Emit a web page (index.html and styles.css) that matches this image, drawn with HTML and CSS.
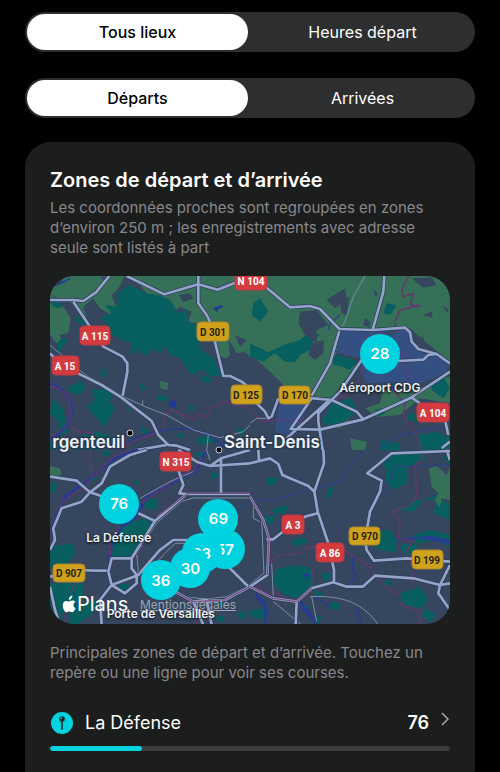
FILE: index.html
```html
<!DOCTYPE html>
<html lang="fr">
<head>
<meta charset="utf-8">
<meta name="viewport" content="width=device-width, initial-scale=1">
<title>Zones de départ et d’arrivée</title>
<link rel="stylesheet" href="styles.css">
</head>
<body>
<main class="page">
  <div class="segmented">
    <button class="segment segment-on" type="button" aria-pressed="true">Tous lieux</button>
    <button class="segment" type="button" aria-pressed="false">Heures départ</button>
  </div>
  <div class="segmented">
    <button class="segment segment-on" type="button" aria-pressed="true">Départs</button>
    <button class="segment" type="button" aria-pressed="false">Arrivées</button>
  </div>

  <section class="card">
    <h1 class="title">Zones de départ et d’arrivée</h1>
    <p class="note">Les coordonnées proches sont regroupées en zones d’environ 250 m ; les enregistrements avec adresse seule sont listés à part</p>

    <div class="map">
      <svg class="map-art" viewBox="0 1 400 348">
        <rect class="land" width="400" height="350"/>
        <g transform="scale(.33333)">
          <!-- north-west -->
          <g>
            <path class="green" d="M45 3H225L205 40 185 60 200 100 180 118 150 100 130 70 100 95 110 130 90 105 60 82 20 78 0 72V40L30 30ZM0 84 40 95 62 130 55 175 28 180 42 212 20 205 0 180ZM225 3H600V245L585 230 560 235 540 200 520 175 505 195 540 235 530 250 510 245 495 195 450 190 440 145 415 140 425 110 390 95 370 110 360 75 330 62 290 55 270 30Z"/>
            <path class="park" d="M205 50 240 30 290 55 330 62 360 75 385 115 412 105 415 140 440 150 445 195 455 225 490 250 515 300 480 305 460 285 425 300 400 265 385 245 365 245 345 215 330 235 305 222 290 245 265 225 240 240 245 205 215 195 185 180 175 150 150 130 185 115 165 90 200 95ZM0 80H45L30 100 10 95ZM75 120 115 145 95 150 75 135ZM20 205 42 185 55 195 25 235ZM155 280 168 285 165 308 150 300ZM50 335 85 325 85 315 110 335 90 360 60 350ZM125 345 190 340 180 380 195 400 165 458 110 395 135 375ZM10 370 40 405 55 470 15 490 30 445 0 415ZM270 325 290 335 275 350ZM325 360 355 365 350 378 320 375ZM415 385 435 400 420 412ZM450 300 485 310 475 325 455 318ZM100 480 140 470 195 485 160 500 165 525H90ZM235 395 240 408 230 410ZM370 480 400 475 405 490ZM550 345 575 380 555 385ZM560 455 590 465 570 485ZM440 490 475 480 500 500 450 510ZM0 500H60L85 525H0ZM270 445 295 470 280 480Z"/>
            <path class="land" d="M150 5H185L165 20ZM555 180 590 195 570 215ZM5 60 60 85 40 92ZM385 60 420 55 430 70 400 82Z"/>
            <path class="green" d="M330 318 355 325 352 345 332 340ZM505 195 535 195 540 240 525 250 512 240Z"/>
            <path class="lake" d="M357 380 368 373 380 382 375 400 358 396ZM490 98 515 90 520 95 505 102 500 112Z"/>
            <path class="river wide" d="M0 327C35 335 62 370 65 400 68 440 30 480 0 492"/>
            <path class="river" d="M0 28C20 28 40 25 60 10M190 525C240 500 290 468 370 462 440 455 480 475 520 515"/>
            <path class="border" d="M0 332C40 342 60 370 62 405 68 440 30 475 0 485M62 455 90 470 130 475 130 490M340 460 345 420 365 405 430 435 440 420 470 425 480 400 520 380 600 400M210 525C250 495 300 480 330 470"/>
            <path class="rail" d="M0 210 100 295 220 365 285 395 350 420 430 465 510 488 580 470 600 450M278 376V392M475 480 470 525"/>
            <path class="case" d="M0 75H70L100 78 138 52 178 3M70 80 120 155 160 215 218 245 232 265 232 290 218 362M230 3 343 58 445 28M445 3V85L470 120 480 140 520 303 540 303 575 320 600 340M445 28 503 44 600 5M0 235 30 265 90 298 155 330 215 368 305 438 325 480 355 510 380 512 420 525M260 525 350 510"/>
            <path class="road" d="M0 75H70L100 78 138 52 178 3M70 80 120 155 160 215 218 245 232 265 232 290 218 362M230 3 343 58 445 28M445 3V85L470 120 480 140 520 303 540 303 575 320 600 340M445 28 503 44 600 5M0 235 30 265 90 298 155 330 215 368 305 438 325 480 355 510 380 512 420 525M260 525 350 510"/>
          </g>
          <!-- north-east -->
          <g transform="translate(600)">
            <path class="green" d="M0 3H600V260L520 195 480 160 370 165 270 165 255 255 225 310 185 365 155 350 110 340 60 290 0 235ZM185 365 235 255 300 280 318 270 245 370ZM400 345 480 355 570 310 600 305V385L510 370 450 420 380 425 345 400 390 385ZM250 455 285 420 300 440 270 460ZM300 490 350 500 345 525H305Z"/>
            <path class="park" d="M10 85 30 70 55 110 30 140 5 120ZM0 205 55 232 100 210 150 195 185 165 210 180 190 195 180 225 150 240 135 262 105 260 75 235 40 260 0 245ZM255 240 300 250 322 262 300 285 250 265ZM410 85 440 90 420 120 400 115ZM245 385 305 370 320 410 290 435 250 460 215 440ZM500 260 560 255 565 275 540 280ZM545 320 580 305 600 340 580 370 545 345ZM470 420 520 410 505 440 470 435ZM395 495 450 505 450 525H385ZM505 480 560 470 600 490V525H510ZM375 405 400 400 405 415 385 425Z"/>
            <path class="land" d="M230 75 285 40 290 75 255 100ZM150 110 200 105 235 150 200 165 200 205 165 180 145 145ZM185 205 222 195 220 235 195 255 175 240ZM270 85 298 65 290 120 275 115ZM485 10 545 8 560 30 520 38ZM370 40 385 60 375 65ZM520 120 545 110 548 128ZM345 130 360 140 360 158 340 150ZM575 90 598 105 590 112ZM0 260 60 290 110 340 80 355 0 380ZM520 185 522 210 490 185ZM300 290 340 285 350 320 320 325Z"/>
            <path class="airport" d="M272 168 360 168 460 160 480 175 500 220 555 235 600 265 590 290 500 330 440 322 350 325 330 290 335 250 260 235ZM85 390 185 370 145 460 110 480 75 470Z"/>
            <path class="park" d="M410 165 440 165 430 180 400 178ZM250 245 315 255 300 278 250 270Z"/>
            <path class="river thin" d="M270 120 240 145 235 165M380 525 450 480 520 465 600 455"/>
            <path class="border" d="M475 5 455 45 460 65 490 55 480 90 510 92 450 105 435 140 440 170 350 185 345 250 330 300 320 340 240 385 215 390 175 440 100 435 40 440 0 405M425 340 465 385 460 420 500 480 515 525M455 230 475 310"/>
            <path class="rail" d="M345 3 310 65 285 140 270 165M0 445 20 430 60 430"/>
            <path class="case" d="M0 5 50 38 120 97 180 93 210 102 268 162 370 165 465 158 480 172 485 200 505 222 560 237 600 265M268 168 240 265 185 362M403 3 400 50 368 165M445 258 520 254 535 240 560 237M335 255 270 350 235 385 205 415 205 440 218 525M165 368 245 375 320 410 340 433M185 370 122 462 210 464 340 433 480 370 600 290M235 378 110 490M485 368 510 385M85 370 65 425 55 430 45 410 20 385M585 435 595 480M575 520 600 500"/>
            <path class="road" d="M0 5 50 38 120 97 180 93 210 102 268 162 370 165 465 158 480 172 485 200 505 222 560 237 600 265M268 168 240 265 185 362M403 3 400 50 368 165M445 258 520 254 535 240 560 237M335 255 270 350 235 385 205 415 205 440 218 525M165 368 245 375 320 410 340 433M185 370 122 462 210 464 340 433 480 370 600 290M235 378 110 490M485 368 510 385M85 370 65 425 55 430 45 410 20 385M585 435 595 480M575 520 600 500"/>
          </g>
          <!-- south-west -->
          <g transform="translate(0 525)">
            <path class="green" d="M0 48 30 55 35 75 0 80ZM225 235 275 225 245 320 220 325Z"/>
            <path class="park" d="M5 95 20 100 15 130 0 125ZM270 155 320 145 325 175 290 180ZM215 225 280 205 310 220 265 300 240 325 185 325 190 275ZM0 290 70 280 75 310 50 345 0 350ZM0 400 100 400 100 450 40 480 30 525H0ZM60 470 140 450 130 490 80 525H60ZM150 10 180 0 175 20ZM480 60 510 75 490 90ZM215 400 245 405 235 425 200 415ZM400 485 420 490 410 510ZM495 500 510 495 525 505 515 520ZM560 490 590 480 580 515ZM120 75 145 80 130 98ZM430 5 470 10 450 30ZM490 460 520 450 515 475ZM250 95 265 88 265 110Z"/>
            <path class="river wide" d="M265 0 200 20 110 95 50 135 15 210 0 250M465 5 440 60 390 85 290 140 255 205 215 230 185 280 175 350 185 400 220 430 265 400"/>
            <path class="border" d="M240 0 190 20 100 110 35 160 0 250M120 0 118 40 130 80 115 95M455 20 435 60 385 80 265 165M320 200 260 320 190 330 175 370M385 60 410 130M40 345 75 400 60 430M390 430 430 470 440 525M210 230 180 280 182 330"/>
            <path class="rail" d="M600 144H430L395 154 320 219 260 310 265 360 250 380M395 440 470 447 530 440 590 410M270 145 360 95 430 65M275 385 345 310 375 280 430 280 540 350 590 410M470 0 480 30"/>
            <path class="case" d="M0 80 80 92 120 127 95 155 35 175 10 235 15 270 0 300M290 0 240 15 180 50 155 100 120 127 160 140M265 190 315 213 245 325 185 325 175 365 185 405 225 430 260 400 260 375 245 355 245 325M600 132H410L315 213M385 60 400 105 388 130 410 132M0 380 75 360 135 362 170 362M155 525 150 450 185 405 265 375 330 300 370 270H440M530 345 590 405 600 410M513 130V25L480 48 440 35 385 0M513 25 600 0M480 48 600 40M0 410 15 480 30 525M285 390 385 430 430 455 525 450 600 410"/>
            <path class="road" d="M0 80 80 92 120 127 95 155 35 175 10 235 15 270 0 300M290 0 240 15 180 50 155 100 120 127 160 140M265 190 315 213 245 325 185 325 175 365 185 405 225 430 260 400 260 375 245 355 245 325M600 132H410L315 213M385 60 400 105 388 130 410 132M0 380 75 360 135 362 170 362M155 525 150 450 185 405 265 375 330 300 370 270H440M530 345 590 405 600 410M513 130V25L480 48 440 35 385 0M513 25 600 0M480 48 600 40M0 410 15 480 30 525M430 455 470 450 485 525M430 455 460 525M285 390 385 430 430 455 525 450 600 410"/>
            <path class="border over" d="M600 130H415L320 200M285 390 385 430 430 455 525 450 600 410"/>
            <path class="river thin" d="M560 180 600 155"/>
          </g>
          <!-- south-east -->
          <g transform="translate(600 525)">
            <path class="park" d="M45 85 85 82 75 105 55 108ZM235 115 255 110 245 135 225 150ZM65 180 90 168 115 170 105 190 70 190ZM40 200 80 195 70 220 40 225ZM75 360 130 345 180 350 185 370 195 410 150 445 100 435 70 400ZM390 30 430 10 510 5 530 25 470 55 470 100 430 120 405 95 410 60ZM445 180 500 150 560 150 550 190 600 210V165L560 135 520 150 490 185ZM490 255 540 240 600 255V290L560 270 500 280ZM370 245 420 240 440 270 435 305 380 300ZM215 370 245 370 240 390 220 395ZM450 430 510 410 535 450 515 475 460 465ZM120 275 160 260 175 275 140 290ZM0 480 50 475 40 510 0 500ZM245 455 270 460 265 480 240 475ZM520 475 555 490 545 515 515 500ZM190 420 225 430 200 440ZM390 395 425 390 420 410ZM450 285 500 280 500 310 460 315ZM580 20 600 10V50ZM155 465 180 470 175 480ZM200 495 215 500 205 525Z"/>
            <path class="green" d="M537 55 560 48 590 75 600 50V150L575 145 570 175 555 150 565 130 545 110Z"/>
            <path class="river thin" d="M0 150 60 152 140 130 265 95 340 0M430 60 410 120 365 160M430 50 600 45"/>
            <path class="river" d="M440 270 510 262 600 280M250 402 295 405 320 380 305 350 310 320M15 430 45 455 45 525M150 470 200 520M320 475 335 525M195 440 240 470"/>
            <path class="river wide" d="M520 262 560 265 600 275M15 430 45 470 50 500M150 455 200 520"/>
            <circle class="lake" cx="170" cy="376" r="7"/>
            <path class="border" d="M60 335 90 315 150 310 180 290 240 290 290 305 360 350 375 375 420 420 450 430M530 0 495 50 500 140 480 165 425 185 450 215 445 265 485 275 465 310 490 350 490 410M185 350 190 380 180 420 155 450M450 460 515 490 505 525M10 400 50 430 75 425 105 445"/>
            <path class="rail" d="M35 210 42 370 0 402M65 340 70 440M10 150V205L30 215M70 455 155 525M180 440C280 435 340 460 385 525M185 440 200 515"/>
            <path class="case" d="M0 40 60 25 85 42 97 75 175 108 193 125M25 0 27 30M220 0 222 40 193 125 203 185 235 280 252 360 252 397M203 190 165 200 105 240 70 268H50M0 140 40 210 57 265 52 375 0 410 70 445 140 455 185 415 250 397 290 410H338L375 377 490 385 570 405 600 400M140 455 137 525M600 3 425 10 352 70 395 92 390 125 360 185 345 270 350 300 372 332 470 325 600 335M600 345 570 405 565 430 600 480M590 0 600 30"/>
            <path class="road" d="M0 40 60 25 85 42 97 75 175 108 193 125M25 0 27 30M220 0 222 40 193 125 203 185 235 280 252 360 252 397M203 190 165 200 105 240 70 268H50M0 140 40 210 57 265 52 375 0 410 70 445 140 455 185 415 250 397 290 410H338L375 377 490 385 570 405 600 400M140 455 137 525M600 3 425 10 352 70 395 92 390 125 360 185 345 270 350 300 372 332 470 325 600 335M600 345 570 405 565 430 600 480M590 0 600 30"/>
            <path class="border over" d="M0 140 40 210 57 265 52 375M0 410 70 445 140 455 185 415"/>
          </g>
        </g>

        <g class="shield red">
          <rect x="185" y="-4" width="32" height="19" rx="4"/><text x="201" y="10">N 104</text>
          <rect x="30" y="51" width="30" height="19" rx="4"/><text x="45" y="65">A 115</text>
          <rect x="2" y="81" width="27" height="19" rx="4"/><text x="15" y="95">A 15</text>
          <rect x="367" y="128" width="32" height="19" rx="4"/><text x="383" y="142">A 104</text>
          <rect x="110" y="177" width="31" height="19" rx="4"/><text x="126" y="191">N 315</text>
          <rect x="232" y="240" width="22" height="19" rx="4"/><text x="243" y="254">A 3</text>
          <rect x="266" y="268" width="28" height="19" rx="4"/><text x="280" y="282">A 86</text>
        </g>
        <g class="shield yellow">
          <rect x="147" y="47" width="32" height="19" rx="4"/><text x="163" y="61">D 301</text>
          <rect x="181" y="110" width="31" height="19" rx="4"/><text x="196" y="124">D 125</text>
          <rect x="229" y="111" width="31" height="18" rx="4"/><text x="245" y="124">D 170</text>
          <rect x="299" y="252" width="31" height="18" rx="4"/><text x="315" y="265">D 970</text>
          <rect x="362" y="275" width="31" height="19" rx="4"/><text x="377" y="289">D 199</text>
          <rect x="3" y="289" width="32" height="18" rx="4"/><text x="19" y="302">D 907</text>
        </g>

        <g class="dot"><circle cx="80" cy="158" r="3"/><circle cx="169" cy="175" r="3"/></g>
        <text class="city" x="75" y="173" text-anchor="end">rgenteuil</text>
        <text class="city" x="174" y="173">Saint-Denis</text>
        <path class="apple" d="M22.500 325.500c-1.900-.1-2.700 1.100-3.900 1.100s-2.200-1-3.600-.4c-1.400.7-2.200 2.200-2.200 4.200 0 3.300 2 6.900 3.900 6.900 1.100 0 1.500-.7 2.700-.7s1.600.7 2.700.7c1.400 0 2.700-2 3.400-4-2.800-1.300-2.800-5 .1-6.200-.7-1-1.800-1.600-3.100-1.600ZM18.800 325c-.1-2.300 1.500-4.100 3.600-4.400.2 2.300-1.600 4.300-3.600 4.400Z"/>
        <text class="plans" x="27" y="336">Plans</text>
      </svg>

      <a class="legal" href="#mentions">Mentions légales</a>
      <span class="place at-cdg">Aéroport CDG</span>
      <span class="place at-defense">La Défense</span>
      <span class="place at-versailles">Porte de Versailles</span>
      <button class="pin pin-28" type="button">28</button>
      <button class="pin pin-76" type="button">76</button>
      <button class="pin pin-57" type="button">57</button>
      <button class="pin pin-63" type="button">63</button>
      <button class="pin pin-69" type="button">69</button>
      <button class="pin pin-30" type="button">30</button>
      <button class="pin pin-36" type="button">36</button>
    </div>

    <p class="note">Principales zones de départ et d’arrivée. Touchez un repère ou une ligne pour voir ses courses.</p>

    <button class="zone" type="button">
      <svg class="zone-icon" viewBox="0 0 22 22" aria-hidden="true">
        <circle cx="11" cy="11" r="11" fill="#00d2df"/>
        <circle cx="11" cy="7" r="2.800" fill="#14282a"/>
        <path d="M11 9v8" stroke="#14282a" stroke-width="1.600" stroke-linecap="round"/>
        <circle cx="10.200" cy="6.200" r=".9" fill="#00d2df"/>
      </svg>
      <span class="zone-name">La Défense</span>
      <span class="zone-count">76</span>
      <svg class="chevron" viewBox="0 0 8 14" aria-hidden="true"><path d="M1 1l6 6-6 6"/></svg>
    </button>
    <div class="bar"><div class="bar-fill" style="width:23%"></div></div>
  </section>
</main>
</body>
</html>
```
FILE: styles.css
```css
* {
  box-sizing: border-box;
}

body {
  margin: 0;
  background: #000;
  color: #fff;
  font-family: Inter, "Liberation Sans", sans-serif;
}

button {
  border: 0;
  padding: 0;
  background: none;
  color: inherit;
  font: inherit;
}

.page {
  height: 100vh;
  overflow: hidden;
  display: flex;
  flex-direction: column;
  padding: 12px 25px 0;
}

.segmented {
  flex: none;
  display: flex;
  height: 40px;
  margin-bottom: 26px;
  padding: 2px;
  border-radius: 20px;
  background: #2d2e30;
}

.segment {
  flex: 1 1 0;
  margin-left: 4px;
  border-radius: 18px;
  font-size: 16px;
}

.segment-on {
  margin-left: 0;
  background: #fff;
  color: #000;
  font-weight: 500;
}

.card {
  flex: 1 0 auto;
  margin-top: -2px;
  padding: 25px;
  border-radius: 26px 26px 0 0;
  background: #1c1d1d;
}

.title {
  margin: 0 0 5px;
  font-size: 20px;
  line-height: 26px;
  font-weight: 600;
}

.note {
  margin: 0;
  color: #88888c;
  font-size: 15px;
  line-height: 20px;
}

.map {
  position: relative;
  margin: 18px 0 19px;
  border-radius: 24px;
  overflow: hidden;
}

.map-art {
  display: block;
  width: 100%;
  height: auto;
}

.land { fill: #36465e; }
.park { fill: #07605f; }
.green { fill: #377059; }
.airport { fill: #344f82; }
.lake { fill: #203a91; }

.river,
.border,
.rail,
.case,
.road {
  fill: none;
  stroke-linejoin: round;
}

.river { stroke: #263c91; stroke-width: 5; }
.river.wide { stroke-width: 9; }
.river.thin { stroke: #2b4084; stroke-width: 4; }
.border { stroke: #63386c; stroke-width: 5; stroke-dasharray: 16 3; }
.border.over { stroke: #7d4f86; stroke-width: 4; stroke-dasharray: none; }
.rail { stroke: #7c8da8; stroke-width: 3; }
.case { stroke: #2c3b56; stroke-width: 12; }
.road { stroke: #94a4ca; stroke-width: 8; }

.shield text {
  stroke: none;
  font: bold 10px Roboto, "Liberation Sans", sans-serif;
  text-anchor: middle;
}

.red { fill: #d43b3f; stroke: #b93b45; }
.red text { fill: #fff; }
.yellow { fill: #d0a21b; stroke: #a7862f; }
.yellow text { fill: #252216; }
.dot { fill: #000; stroke: #c7ccd5; }

.city {
  fill: #eef2f8;
  stroke: #2c3a50;
  stroke-width: 3px;
  paint-order: stroke;
  font-size: 17px;
  font-weight: 600;
}

.apple { fill: #fff; }

.plans {
  fill: #fff;
  font-size: 20px;
}

.legal,
.place {
  position: absolute;
  transform: translate(-50%, -50%);
  line-height: 14px;
  white-space: nowrap;
}

.legal {
  left: 34.5%;
  top: 94.5%;
  color: #9aa4b2;
  font-size: 12px;
}

.place {
  color: #eef0f4;
  font-size: 12px;
  font-weight: 600;
  text-shadow: 0 1px 3px #000;
}

.at-cdg { left: 82.5%; top: 32.3%; }
.at-defense { left: 17.2%; top: 75.2%; }
.at-versailles { left: 27.7%; top: 97.1%; }

.pin {
  position: absolute;
  width: 40px;
  height: 40px;
  border-radius: 50%;
  background: #00d2df;
  font-size: 15px;
  font-weight: 600;
  transform: translate(-50%, -50%);
}

.pin-28 { left: 82.5%; top: 22.4%; }
.pin-76 { left: 17.3%; top: 65.4%; }
.pin-69 { left: 42.1%; top: 69.8%; }
.pin-57 { left: 43.7%; top: 78.5%; }
.pin-63 { left: 37.9%; top: 79.7%; }
.pin-30 { left: 35.1%; top: 84%; }
.pin-36 { left: 27.7%; top: 87.4%; }

.zone {
  display: flex;
  align-items: center;
  width: 100%;
  margin-top: 28px;
  line-height: 24px;
  font-size: 18px;
  text-align: left;
}

.zone-icon {
  width: 22px;
  height: 22px;
  margin: 0 12px 0 1px;
}

.zone-name {
  flex: 1;
}

.zone-count {
  font-weight: 600;
}

.chevron {
  width: 8px;
  height: 14px;
  margin: 0 1px 8px 12px;
  fill: none;
  stroke: #a8a8ad;
  stroke-width: 1.5;
}

.bar {
  height: 5px;
  margin-top: 11px;
  border-radius: 3px;
  background: #3b3b3d;
  overflow: hidden;
}

.bar-fill {
  height: 100%;
  border-radius: 3px;
  background: #00d2df;
}
```
